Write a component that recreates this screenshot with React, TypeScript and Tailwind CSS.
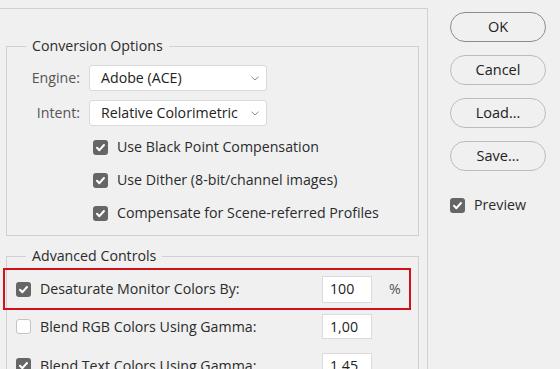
import React from 'react';

const font = { fontFamily: '"Open Sans", "Noto Sans", sans-serif' };

function Check({ checked = true }: { checked?: boolean }) {
  if (!checked) {
    return <span className="block w-[15px] h-[15px] shrink-0 rounded-[3px] border border-[#c4c4c4] bg-white" />;
  }
  return (
    <span className="flex w-[15px] h-[15px] shrink-0 items-center justify-center rounded-[3px] bg-[#666666]">
      <svg width="11" height="11" viewBox="0 0 11 11">
        <polyline points="2,5.8 4.4,8.2 9,3" fill="none" stroke="#ffffff" strokeWidth="2" strokeLinecap="round" strokeLinejoin="round" />
      </svg>
    </span>
  );
}

function Select({ value }: { value: string }) {
  return (
    <div className="flex h-[26px] w-[178px] items-center justify-between rounded-[3px] border border-[#dadada] bg-white pl-[11px] pr-[7px] text-[#222]">
      <span>{value}</span>
      <svg width="8" height="5" viewBox="0 0 8 5">
        <polyline points="0.5,0.8 4,4 7.5,0.8" fill="none" stroke="#8a8a8a" strokeWidth="1" />
      </svg>
    </div>
  );
}

function PillButton({ label, strong = false }: { label: string; strong?: boolean }) {
  return (
    <button
      className={
        'h-[30px] w-[96px] rounded-full bg-[#f0f0f0] text-[14.5px] text-[#222] border ' +
        (strong ? 'border-[#8c8c8c]' : 'border-[#bcbcbc]')
      }
    >
      {label}
    </button>
  );
}

function CheckRow({ label }: { label: string }) {
  return (
    <div className="flex h-[20px] items-center gap-[9px]">
      <Check />
      <span>{label}</span>
    </div>
  );
}

export default function App() {
  return (
    <div className="flex h-[369px] w-[560px] overflow-hidden bg-[#f0f0f0] text-[14.2px] leading-[20px] text-[#2b2b2b]" style={font}>
      {/* left panel */}
      <div className="w-[428px] shrink-0">
        <div className="mt-[8px] ml-[-10px] h-[400px] w-[438px] border border-[#d0d0d0] pl-[15px] pr-[8px] pt-[27px]">
          <fieldset className="border border-[#d0d0d0] pb-[12px]">
            <legend className="ml-[19px] px-[6px] text-[#2b2b2b]">Conversion Options</legend>
            <div className="mt-[9px] flex flex-col gap-[9px]">
              <div className="flex items-center gap-[9px]">
                <span className="w-[73px] text-right text-[#555]">Engine:</span>
                <Select value="Adobe (ACE)" />
              </div>
              <div className="flex items-center gap-[9px]">
                <span className="w-[73px] text-right text-[#555]">Intent:</span>
                <Select value="Relative Colorimetric" />
              </div>
            </div>
            <div className="mt-[11px] flex flex-col gap-[13px] pl-[86px]">
              <CheckRow label="Use Black Point Compensation" />
              <CheckRow label="Use Dither (8-bit/channel images)" />
              <CheckRow label="Compensate for Scene-referred Profiles" />
            </div>
          </fieldset>

          <fieldset className="mt-[10px] border border-[#d0d0d0] pb-[12px]">
            <legend className="ml-[19px] px-[6px]">Advanced Controls</legend>
            <div className="mt-[2px] ml-[-4px] flex h-[42px] w-[408px] items-center border-2 border-[#d0111a] pl-[11px]">
              <Check />
              <span className="ml-[9px] w-[282px]">Desaturate Monitor Colors By:</span>
              <div className="flex h-[27px] w-[50px] items-center border border-[#dadada] bg-white pl-[7px] text-[#222]">100</div>
              <span className="ml-[17px] text-[#555]">%</span>
            </div>
            <div className="mt-[4px] flex h-[25px] items-center pl-[9px]">
              <Check checked={false} />
              <span className="ml-[9px] w-[282px]">Blend RGB Colors Using Gamma:</span>
              <div className="flex h-[25px] w-[50px] items-center border border-[#dadada] bg-white pl-[7px] text-[#222]">1,00</div>
            </div>
            <div className="mt-[14px] flex h-[25px] items-center pl-[9px]">
              <Check />
              <span className="ml-[9px] w-[282px]">Blend Text Colors Using Gamma:</span>
              <div className="flex h-[25px] w-[50px] items-center border border-[#dadada] bg-white pl-[7px] text-[#222]">1,45</div>
            </div>
          </fieldset>
        </div>
      </div>

      {/* right panel */}
      <div className="flex flex-col pl-[22px] pt-[12px]">
        <div className="flex flex-col gap-[13px]">
          <PillButton label="OK" strong />
          <PillButton label="Cancel" />
          <PillButton label="Load..." />
          <PillButton label="Save..." />
        </div>
        <div className="mt-[24px] flex items-center gap-[9px]">
          <Check />
          <span>Preview</span>
        </div>
      </div>
    </div>
  );
}
